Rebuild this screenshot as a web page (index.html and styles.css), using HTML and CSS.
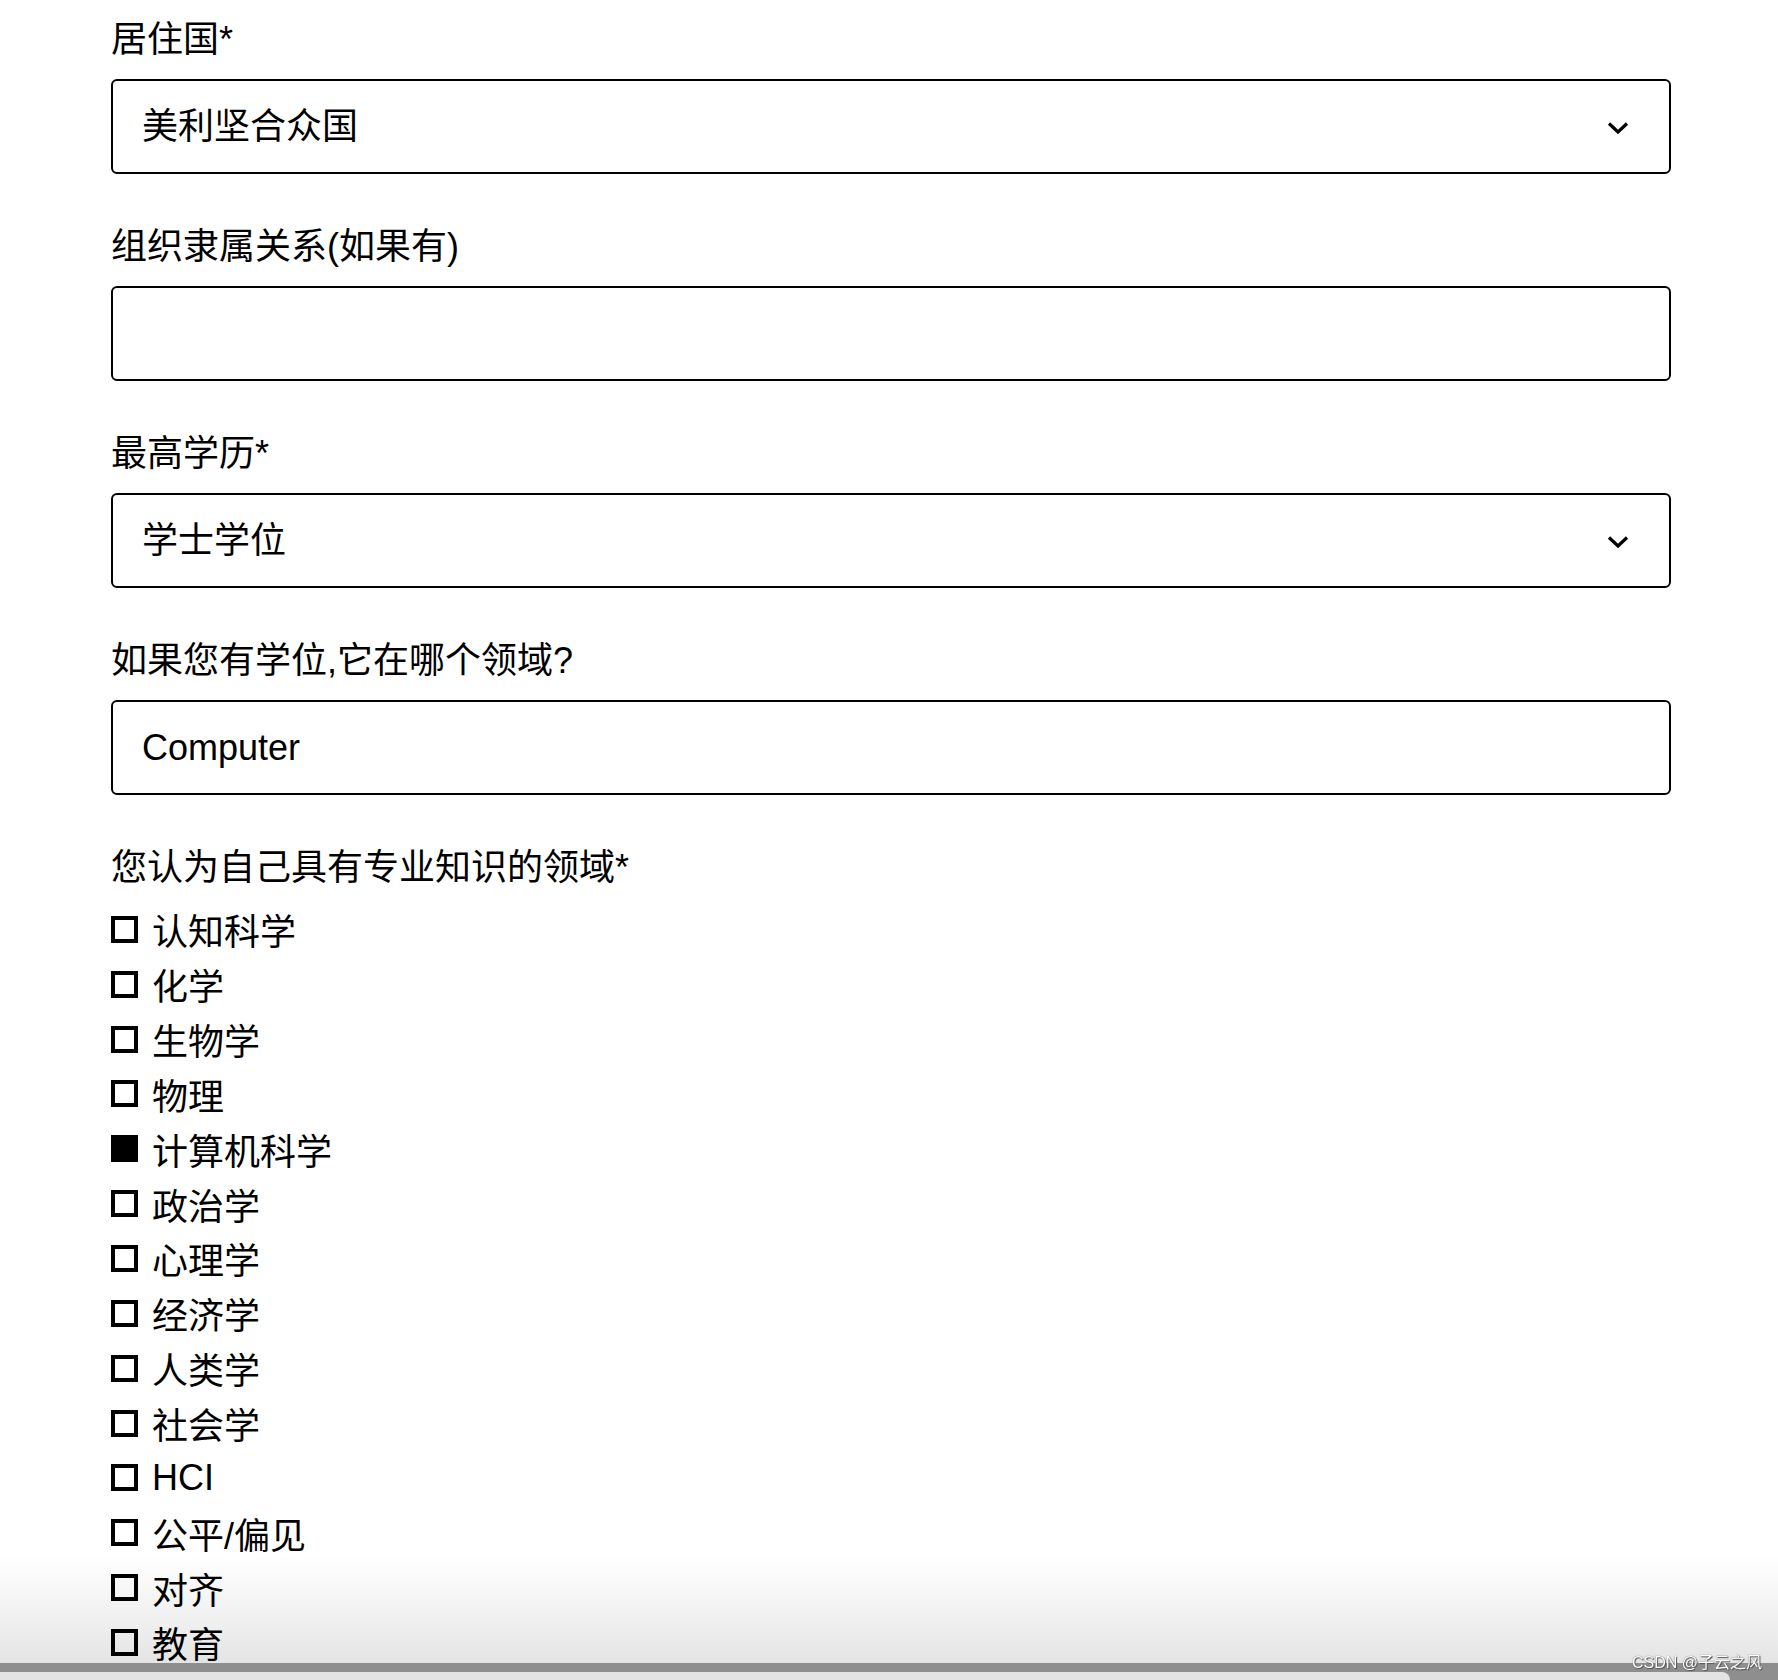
FILE: index.html
```html
<!DOCTYPE html>
<html lang="zh-CN">
<head>
<meta charset="utf-8">
<title>表单</title>
<link rel="stylesheet" href="styles.css">
</head>
<body>
<main class="form">
  <div class="field">
    <div class="label">居住国*</div>
    <div class="box select">
      <span class="value">美利坚合众国</span>
      <svg class="chev" width="22" height="14" viewBox="0 0 22 14"><path d="M2 2.5 L11 11 L20 2.5" fill="none" stroke="#000" stroke-width="3.2"/></svg>
    </div>
  </div>
  <div class="field">
    <div class="label">组织隶属关系(如果有)</div>
    <div class="box"></div>
  </div>
  <div class="field">
    <div class="label">最高学历*</div>
    <div class="box select">
      <span class="value">学士学位</span>
      <svg class="chev" width="22" height="14" viewBox="0 0 22 14"><path d="M2 2.5 L11 11 L20 2.5" fill="none" stroke="#000" stroke-width="3.2"/></svg>
    </div>
  </div>
  <div class="field">
    <div class="label">如果您有学位,它在哪个领域?</div>
    <div class="box"><span class="value">Computer</span></div>
  </div>
  <div class="group">
    <div class="label">您认为自己具有专业知识的领域*</div>
    <ul class="checks">
      <li><span class="cb"></span>认知科学</li>
      <li><span class="cb"></span>化学</li>
      <li><span class="cb"></span>生物学</li>
      <li><span class="cb"></span>物理</li>
      <li><span class="cb on"></span>计算机科学</li>
      <li><span class="cb"></span>政治学</li>
      <li><span class="cb"></span>心理学</li>
      <li><span class="cb"></span>经济学</li>
      <li><span class="cb"></span>人类学</li>
      <li><span class="cb"></span>社会学</li>
      <li><span class="cb"></span>HCI</li>
      <li><span class="cb"></span>公平/偏见</li>
      <li><span class="cb"></span>对齐</li>
      <li><span class="cb"></span>教育</li>
    </ul>
  </div>
</main>
<div class="shade">
  <div class="fade"></div>
  <div class="bar"></div>
  <div class="strip"><div class="strip-light"></div></div>
  <div class="mark">CSDN @子云之风</div>
</div>
</body>
</html>
```
FILE: styles.css
```css
html, body {
  margin: 0;
  padding: 0;
  background: #fff;
}
body {
  font-family: "Liberation Sans", "Noto Sans CJK SC", sans-serif;
  color: #000;
  font-size: 36px;
}
.form {
  width: 1560px;
  margin-left: 111px;
  padding-top: 18px;
}
.field {
  margin-bottom: 51px;
}
.label {
  height: 44px;
  line-height: 44px;
  white-space: nowrap;
}
.box {
  margin-top: 17px;
  height: 95px;
  box-sizing: border-box;
  border: 2.5px solid #000;
  border-radius: 6px;
  display: flex;
  align-items: center;
  padding: 0 40px 0 29px;
}
.value {
  line-height: 44px;
  flex: 1;
}
.chev {
  display: block;
  margin-top: 2px;
}
.checks {
  list-style: none;
  margin: 12px 0 0;
  padding: 0;
}
.checks li {
  height: 54.85px;
  display: flex;
  align-items: center;
  white-space: nowrap;
}
.cb {
  width: 27px;
  height: 27px;
  box-sizing: border-box;
  border: 4.5px solid #000;
  margin-right: 14px;
  flex: none;
}
.cb.on {
  background: #000;
}
.shade {
  position: fixed;
  left: 0;
  right: 0;
  bottom: 0;
  height: 125px;
  pointer-events: none;
  mix-blend-mode: multiply;
}
.fade {
  height: 108px;
  background: linear-gradient(to bottom, rgba(230,230,230,0) 0%, rgba(230,230,230,0.6) 60%, rgba(228,228,228,1) 100%);
}
.bar {
  height: 9px;
  background: #8e8e8e;
}
.strip {
  height: 8px;
  background: #8e8e8e;
}
.strip-light {
  width: 1730px;
  height: 8px;
  background: #e3e3e3;
  border-top-right-radius: 14px;
}
.mark {
  position: fixed;
  right: 16px;
  bottom: 8px;
  font-size: 16px;
  line-height: 18px;
  color: #fff;
  text-shadow: 0 0 1px #444, 1px 1px 1px #555;
}
```
